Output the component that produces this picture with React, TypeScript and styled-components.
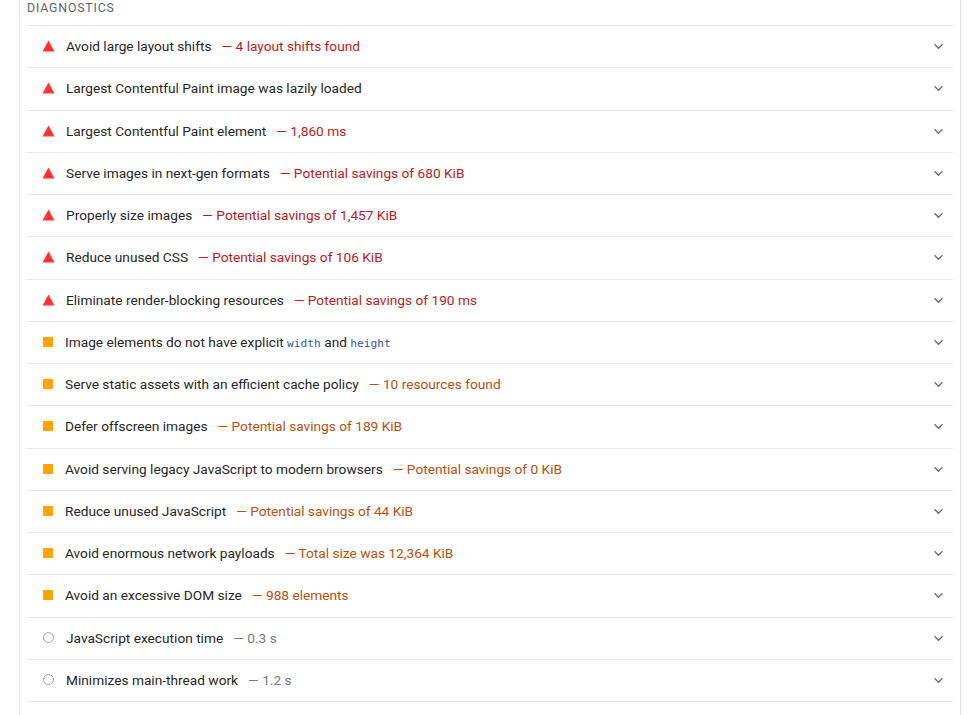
import React from 'react';
import styled, { createGlobalStyle } from 'styled-components';

type Rating = 'fail' | 'average' | 'info';

interface Audit {
  title: React.ReactNode;
  display?: string;
  rating: Rating;
}

const GlobalStyle = createGlobalStyle`
  html, body {
    margin: 0;
    padding: 0;
    background: #ffffff;
  }
  body {
    font-family: Roboto, "Liberation Sans", Arial, sans-serif;
    -webkit-font-smoothing: antialiased;
  }
`;

const Page = styled.div`
  height: 715px;
  overflow: hidden;
  background: #fff;
`;

const Section = styled.section`
  margin-left: 19px;
  width: 942px;
  min-height: 715px;
  border-left: 1px solid #e3e3e3;
  border-right: 1px solid #e3e3e3;
  padding: 0 7px;
  box-sizing: border-box;
`;

const Header = styled.div`
  height: 25px;
  padding-top: 1px;
  box-sizing: border-box;
  font-size: 12.3px;
  line-height: 14px;
  letter-spacing: 0.85px;
  color: #5f6368;
  text-transform: uppercase;
`;

const List = styled.div`
  display: flex;
  flex-direction: column;
`;

const Row = styled.div`
  height: 42.25px;
  box-sizing: border-box;
  border-top: 1px solid #ebebeb;
  display: flex;
  align-items: center;
  padding: 0 9px 1px 14px;
`;

const IconSlot = styled.div<{ $gap: number }>`
  width: 14px;
  height: 14px;
  display: flex;
  align-items: center;
  justify-content: center;
  margin-right: ${(p) => p.$gap}px;
  flex: none;
`;

const Square = styled.div`
  width: 10px;
  height: 10px;
  background: #ffa400;
`;

const Circle = styled.div`
  width: 9px;
  height: 9px;
  border: 1.5px solid #a6a6a6;
  border-radius: 50%;
`;

const Title = styled.div`
  flex: 1;
  font-size: 13.7px;
  color: #262626;
  white-space: nowrap;
`;

const Display = styled.span<{ $rating: Rating }>`
  margin-left: 10px;
  color: ${(p) =>
    p.$rating === 'fail' ? '#b91c1c' : p.$rating === 'average' ? '#b8500f' : '#7a7a7a'};
`;

const Code = styled.code`
  font-family: "DejaVu Sans Mono", "Liberation Mono", monospace;
  font-size: 11.2px;
  color: #2f55a8;
`;

const Chevron = styled.svg`
  width: 11px;
  height: 10px;
  flex: none;
`;

const Triangle = () => (
  <svg width="13" height="12" viewBox="0 0 13 12">
    <polygon points="6.5,0.5 12.5,11.5 0.5,11.5" fill="#ff3333" />
  </svg>
);

const RatingIcon = ({ rating }: { rating: Rating }) => (
  <IconSlot $gap={rating === 'average' ? 10 : 11}>
    {rating === 'fail' ? <Triangle /> : rating === 'average' ? <Square /> : <Circle />}
  </IconSlot>
);

const audits: Audit[] = [
  { title: 'Avoid large layout shifts', display: '4 layout shifts found', rating: 'fail' },
  { title: 'Largest Contentful Paint image was lazily loaded', rating: 'fail' },
  { title: 'Largest Contentful Paint element', display: '1,860 ms', rating: 'fail' },
  { title: 'Serve images in next-gen formats', display: 'Potential savings of 680 KiB', rating: 'fail' },
  { title: 'Properly size images', display: 'Potential savings of 1,457 KiB', rating: 'fail' },
  { title: 'Reduce unused CSS', display: 'Potential savings of 106 KiB', rating: 'fail' },
  { title: 'Eliminate render-blocking resources', display: 'Potential savings of 190 ms', rating: 'fail' },
  {
    title: (
      <>
        Image elements do not have explicit <Code>width</Code> and <Code>height</Code>
      </>
    ),
    rating: 'average',
  },
  { title: 'Serve static assets with an efficient cache policy', display: '10 resources found', rating: 'average' },
  { title: 'Defer offscreen images', display: 'Potential savings of 189 KiB', rating: 'average' },
  { title: 'Avoid serving legacy JavaScript to modern browsers', display: 'Potential savings of 0 KiB', rating: 'average' },
  { title: 'Reduce unused JavaScript', display: 'Potential savings of 44 KiB', rating: 'average' },
  { title: 'Avoid enormous network payloads', display: 'Total size was 12,364 KiB', rating: 'average' },
  { title: 'Avoid an excessive DOM size', display: '988 elements', rating: 'average' },
  { title: 'JavaScript execution time', display: '0.3 s', rating: 'info' },
  { title: 'Minimizes main-thread work', display: '1.2 s', rating: 'info' },
  { title: '', rating: 'info' },
];

export default function App() {
  return (
    <Page>
      <GlobalStyle />
      <Section>
        <Header>Diagnostics</Header>
        <List>
          {audits.map((a, i) =>
            a.title === '' ? (
              <Row key={i} />
            ) : (
              <Row key={i}>
                <RatingIcon rating={a.rating} />
                <Title>
                  {a.title}
                  {a.display && <Display $rating={a.rating}>— {a.display}</Display>}
                </Title>
                <Chevron viewBox="0 0 11 10">
                  <path d="M1.5 3.2l4 4 4-4" fill="none" stroke="#707070" strokeWidth="1.4" />
                </Chevron>
              </Row>
            )
          )}
        </List>
      </Section>
    </Page>
  );
}
